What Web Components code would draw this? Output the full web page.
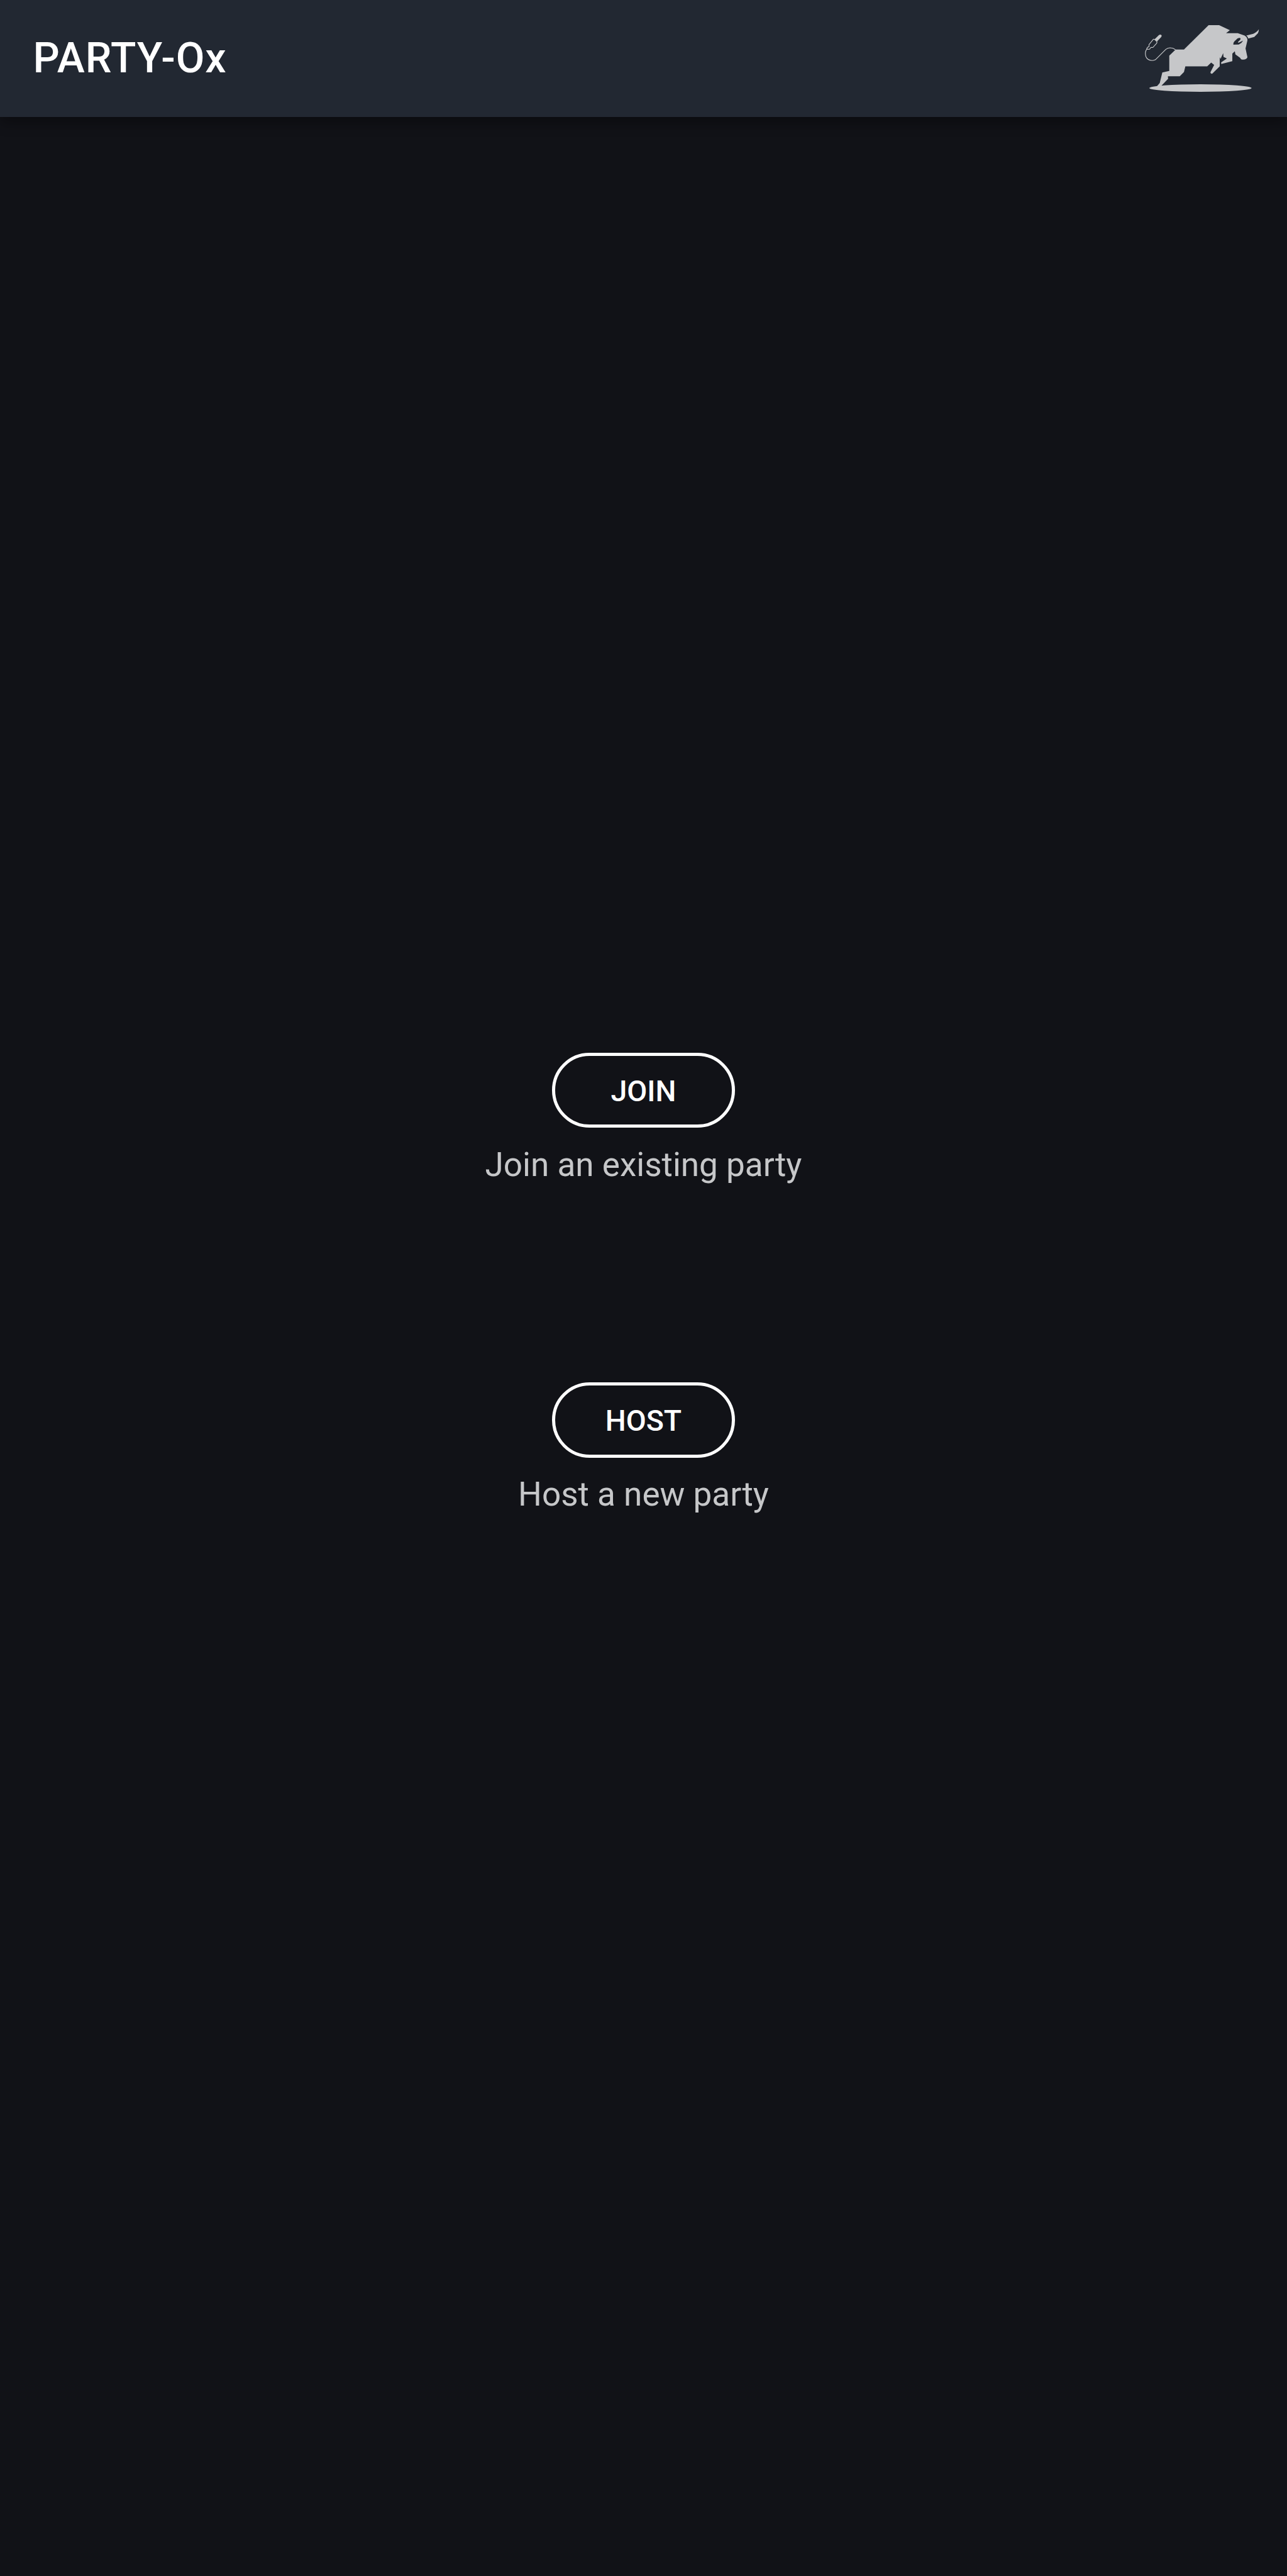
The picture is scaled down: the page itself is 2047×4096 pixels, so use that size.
<!DOCTYPE html>
<html lang="en">
<head>
<meta charset="utf-8">
<title>PARTY-Ox</title>
<style>
  :root { --u: calc(100vw / 2160); }
  html, body { margin: 0; height: 100%; background: #111217; overflow: hidden; }
  body { font-family: Roboto, "Liberation Sans", sans-serif; }
</style>
</head>
<body>
<party-app></party-app>
<script>
class OxLogo extends HTMLElement {
  constructor() {
    super();
    this.attachShadow({ mode: "open" }).innerHTML = `
      <style>
        :host { display: block; width: calc(240 * var(--u)); height: calc(150 * var(--u)); margin-bottom: calc(6 * var(--u)); }
        svg { display: block; width: 100%; height: 100%; }
      </style>
      <svg viewBox="0 0 720 450" fill="#c6c7c9" aria-hidden="true">
        <ellipse cx="343" cy="383" rx="257.5" ry="19"/>
        <path d="M218 189.500 L260 189.500 L384 66.500 H437 L491 92 L472 107 H531 L565 119 Q580 127 579.500 143 L570 184 L579.500 228 Q574 240 560 240 Q546 241 543 231 L519 214 L516 198 L503.500 210 V248 L448 262 L447 254 L476 234.500 L459 226 L457.500 207 L444 237 L440 227 V274 L402 311 Q394 312 393 304 L412 267 L397 254.500 L377 273.500 H267 L260 302 L239 323.500 H179 L180 336 L146 372 L140 380 L123 375 L138 358 L151 305 L186 296.500 V220 Z"/>
        <path fill="#222832" d="M508.500 165 Q507 155 514 148 L529 134 Q537 130 543 131 Q546 134 544 139 L532 151 Q530 155 536 154 L558 144 L549 156 L536 164 Z"/>
        <path d="M574 118.500 L609 110 Q628 101 637 87 Q637 99 632 108 L614 126 L584 133.500 Q581 123 574 118.500 Z"/>
        <g fill="none" stroke="#c6c7c9" stroke-width="3.600" stroke-linejoin="round">
          <path d="M217 190 Q206 181 190 180.500 Q177 181 169 188 L119 238 Q114 244 99 244.500 Q75 243 68 224 Q61 202 74 185"/>
          <path d="M75 188 L73 183 L78 177 L84 175 V164 L106 137 L112 138 L124 150 L123 157 L103 179 L94 178 L87 187 Z"/>
        </g>
        <path d="M112 138 L133 117 Q141 111 147 117 Q149 122 145 127 L124 149 Z"/>
      </svg>`;
  }
}

class AppToolbar extends HTMLElement {
  constructor() {
    super();
    this.attachShadow({ mode: "open" }).innerHTML = `
      <style>
        :host {
          display: flex; align-items: center; justify-content: space-between;
          box-sizing: border-box; flex: none;
          height: calc(196 * var(--u));
          padding: 0 calc(20 * var(--u)) 0 calc(55.500 * var(--u));
          background: #222832;
          box-shadow: 0 calc(9 * var(--u)) calc(22 * var(--u)) rgba(0, 0, 0, .35);
        }
        h1 {
          margin: 0; color: #fff; font-weight: 500;
          font-size: calc(70 * var(--u)); line-height: 1.2; letter-spacing: calc(.9 * var(--u));
        }
      </style>
      <h1><slot></slot></h1>
      <slot name="logo"></slot>`;
  }
}

class PillButton extends HTMLElement {
  constructor() {
    super();
    this.attachShadow({ mode: "open" }).innerHTML = `
      <style>
        :host { display: block; }
        button {
          display: flex; align-items: center; justify-content: center;
          box-sizing: border-box; margin: 0;
          width: calc(308 * var(--u)); height: calc(126.500 * var(--u));
          padding: calc(4 * var(--u)) 0 0;
          border: calc(5.280 * var(--u)) solid #fff; border-radius: calc(64 * var(--u));
          background: none; color: #fff;
          font: 500 calc(49 * var(--u)) / 1.2 Roboto, "Liberation Sans", sans-serif;
        }
      </style>
      <button type="button"><slot></slot></button>`;
  }
}

class PartyOption extends HTMLElement {
  constructor() {
    super();
    this.attachShadow({ mode: "open" }).innerHTML = `
      <style>
        :host { display: flex; flex-direction: column; align-items: center; gap: calc(29.500 * var(--u)); }
        p {
          margin: 0; color: #c6c7c9;
          font-size: calc(56 * var(--u)); line-height: calc(66 * var(--u));
        }
      </style>
      <pill-button><slot name="action"></slot></pill-button>
      <p><slot></slot></p>`;
  }
}

class PartyApp extends HTMLElement {
  constructor() {
    super();
    this.attachShadow({ mode: "open" }).innerHTML = `
      <style>
        :host { display: flex; flex-direction: column; height: 100vh; }
        main {
          flex: 1; display: flex; flex-direction: column; align-items: center;
          gap: calc(331 * var(--u)); padding-top: calc(1570 * var(--u));
        }
      </style>
      <app-toolbar>PARTY-Ox<ox-logo slot="logo"></ox-logo></app-toolbar>
      <main>
        <party-option><span slot="action">JOIN</span>Join an existing party</party-option>
        <party-option><span slot="action">HOST</span>Host a new party</party-option>
      </main>`;
  }
}

customElements.define("ox-logo", OxLogo);
customElements.define("app-toolbar", AppToolbar);
customElements.define("pill-button", PillButton);
customElements.define("party-option", PartyOption);
customElements.define("party-app", PartyApp);
</script>
</body>
</html>
